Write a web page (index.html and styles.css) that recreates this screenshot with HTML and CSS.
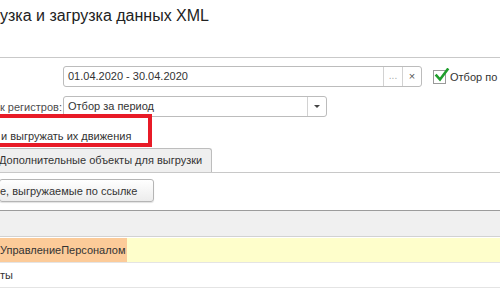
FILE: index.html
```html
<!DOCTYPE html>
<html lang="ru">
<head>
    <meta charset="UTF-8">
    <title>Выгрузка и загрузка данных XML</title>
    <link rel="stylesheet" href="styles.css">
</head>
<body>

    <!-- Заголовок формы -->
    <div class="form-header">
        <h1>узка и загрузка данных XML</h1>
    </div>

    <div class="form-body">
        <!-- Период -->
        <div class="field-row">
            <div class="field-label"></div>
            <div class="input input-period">
                <span class="input-text">01.04.2020 - 30.04.2020</span>
                <span class="input-btn dots">...</span>
                <span class="input-btn clear">×</span>
            </div>
            <label class="check">
                <span class="check-box">
                    <svg width="16" height="16" viewBox="0 0 16 16">
                        <path d="M2.5 7.5 L6 11.5 L13.5 1.5" fill="none" stroke="#1f9e2c" stroke-width="2.6" stroke-linecap="square"/>
                    </svg>
                </span>
                Отбор по
            </label>
        </div>

        <!-- Способ отбора -->
        <div class="field-row">
            <div class="field-label">к регистров:</div>
            <div class="input input-select">
                <span class="input-text">Отбор за период</span>
                <span class="input-btn drop"><i class="arrow"></i></span>
            </div>
        </div>

        <!-- Выделенная настройка -->
        <div class="marked-row">
            <span>и выгружать их движения</span>
        </div>
    </div>

    <!-- Закладки -->
    <div class="tabs">
        <div class="tab active">Дополнительные объекты для выгрузки</div>
    </div>

    <div class="toolbar">
        <button class="btn">е, выгружаемые по ссылке</button>
    </div>

    <!-- Таблица объектов -->
    <div class="grid">
        <div class="grid-head"></div>
        <div class="grid-row current">
            <span class="cell selected">УправлениеПерсоналом</span>
        </div>
        <div class="grid-row">
            <span class="cell">ты</span>
        </div>
    </div>

</body>
</html>
```

FILE: styles.css
```css
/* Базовые стили */
body {
    margin: 0;
    width: 500px;
    height: 290px;
    overflow: hidden;
    background: #fff;
    font-family: "Liberation Sans", Arial, sans-serif;
    font-size: 11px;
    color: #333;
}

/* Заголовок */
.form-header {
    height: 57px;
    border-bottom: 1px solid #c9c9c9;
}

.form-header h1 {
    margin: 0;
    padding-top: 6px;
    font-size: 16px;
    font-weight: normal;
    line-height: 20px;
    color: #222;
}

.form-body {
    padding-top: 8px;
}

/* Строки с полями */
.field-row {
    display: flex;
    align-items: center;
    height: 21px;
    margin-bottom: 9px;
}

.field-label {
    width: 59px;
    margin-right: 4px;
    text-align: right;
    white-space: nowrap;
    color: #4d4d4d;
}

.input {
    display: flex;
    height: 21px;
    box-sizing: border-box;
    border: 1px solid #bcbcbc;
    border-radius: 3px;
    background: #fff;
}

.input-text {
    flex: 1;
    padding-left: 4px;
    line-height: 19px;
    color: #333;
}

.input-period {
    width: 359px;
}

.input-select {
    width: 264px;
}

.input-btn {
    width: 18px;
    border-left: 1px solid #d2d2d2;
    text-align: center;
    line-height: 18px;
    color: #777;
}

.input-btn.dots {
    color: #aaa;
    font-size: 10px;
}

.input-btn.clear {
    width: 18px;
    font-size: 11px;
    color: #555;
}

.input-btn.drop {
    display: flex;
    align-items: center;
    justify-content: center;
}

.arrow {
    width: 0;
    height: 0;
    border-left: 3px solid transparent;
    border-right: 3px solid transparent;
    border-top: 3px solid #444;
}

/* Флажок */
.check {
    display: flex;
    align-items: center;
    margin-left: 11px;
    white-space: nowrap;
    font-size: 11px;
    color: #333;
}

.check-box {
    position: relative;
    width: 11px;
    height: 12px;
    border: 1px solid #9a9a9a;
    background: #fff;
    margin-right: 4px;
}

.check-box svg {
    position: absolute;
    left: 0;
    top: -3px;
}

/* Строка, обведённая красной рамкой */
.marked-row {
    position: relative;
    height: 33px;
    margin-top: -12px;
    padding-top: 13px;
    box-sizing: border-box;
}

.marked-row span {
    display: block;
    line-height: 18px;
    padding-left: 1px;
    color: #333;
}

.marked-row::after {
    content: "";
    position: absolute;
    left: -10px;
    top: 0;
    width: 162px;
    height: 33px;
    box-sizing: border-box;
    border: 4.5px solid #e81b27;
}

/* Закладки */
.tabs {
    display: flex;
    margin-top: 1px;
    border-bottom: 1px solid #c8c8c8;
}

.tab {
    width: 212px;
    height: 24px;
    box-sizing: border-box;
    border: 1px solid #bdbdbd;
    border-left: none;
    border-bottom: none;
    border-radius: 0 3px 0 0;
    background: #efefef;
    line-height: 23px;
    text-indent: -1px;
    white-space: nowrap;
    color: #333;
}

/* Кнопка */
.toolbar {
    padding-top: 6px;
    height: 30px;
    box-sizing: border-box;
}

.btn {
    display: block;
    width: 155px;
    height: 23px;
    margin: 0 0 0 -1px;
    padding: 0;
    border: 1px solid #b5b5b5;
    border-radius: 3px;
    background: linear-gradient(#ffffff, #ececec);
    box-shadow: 0 1px 1px rgba(0, 0, 0, 0.12);
    font-family: inherit;
    font-size: 11px;
    color: #333;
    text-align: left;
    text-indent: 0;
}

/* Таблица */
.grid {
    margin-top: 7px;
    border-top: 1px solid #9c9c9c;
}

.grid-head {
    height: 25px;
    background: #f0f0f0;
    border-bottom: 1px solid #d2d2d2;
    margin-bottom: 1px;
}

.grid-row {
    height: 24px;
    border-bottom: 1px solid #e4e4e4;
    display: flex;
}

.grid-row.current {
    background: #fefecb;
}

.cell {
    line-height: 24px;
    padding-left: 0;
    color: #333;
}

.cell.selected {
    width: 127px;
    background: #fccb99;
}
```
